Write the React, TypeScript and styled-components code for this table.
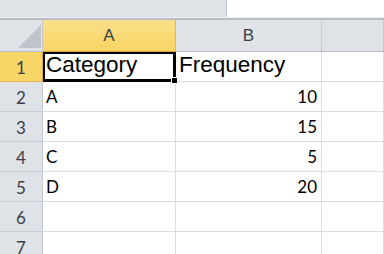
import React from "react";
import styled, { createGlobalStyle, css } from "styled-components";

const GlobalStyle = createGlobalStyle`
  html, body {
    margin: 0;
    padding: 0;
    background: #ffffff;
    overflow: hidden;
  }
`;

const Sheet = styled.div`
  width: 384px;
  height: 254px;
  overflow: hidden;
  background: #ffffff;
  display: flex;
  flex-direction: column;
`;

const FormulaStrip = styled.div`
  flex-shrink: 0;
  height: 17px;
  display: grid;
  grid-template-columns: 226px 1fr;
  background: #dfe3e8;
  border-bottom: 1px solid #eef0f3;
`;

const FormulaInput = styled.div`
  background: #ffffff;
  border-left: 1px solid #c3c8cf;
`;

const Divider = styled.div`
  flex-shrink: 0;
  height: 2px;
  background: #b9bec6;
`;

const Grid = styled.div`
  flex-shrink: 0;
  display: grid;
  grid-template-columns: 43px 133px 146px 1fr;
  grid-template-rows: 32px repeat(7, 30px);
`;

const CornerCell = styled.div`
  background: #dfe3e8;
  border-right: 1px solid #c4c9d0;
  border-bottom: 1px solid #b7bcc4;
  display: flex;
  align-items: flex-end;
  justify-content: flex-end;
  padding: 0 1px 3px 0;
`;

const ColHeader = styled.div<{ $active?: boolean }>`
  background: ${(p) =>
    p.$active ? "linear-gradient(#fbe08a, #f8d462)" : "#dfe3e8"};
  border-right: 1px solid ${(p) => (p.$active ? "#e2b94a" : "#c4c9d0")};
  border-bottom: 1px solid ${(p) => (p.$active ? "#d7a93a" : "#b7bcc4")};
  display: flex;
  align-items: center;
  justify-content: center;
  font-family: "Liberation Sans", Arial, sans-serif;
  font-size: 17px;
  color: #3c3f44;
  padding-top: 1px;
`;

const RowHeader = styled.div<{ $active?: boolean }>`
  background: ${(p) => (p.$active ? "#f9d567" : "#dfe3e8")};
  border-right: 1px solid ${(p) => (p.$active ? "#d7a93a" : "#c4c9d0")};
  border-bottom: 1px solid ${(p) => (p.$active ? "#e2b94a" : "#c9ced5")};
  display: flex;
  align-items: flex-end;
  justify-content: center;
  padding-bottom: 3px;
  font-family: Lato, "Open Sans", sans-serif;
  font-size: 17px;
  color: #3c3f44;
`;

const Cell = styled.div<{ $align?: "left" | "right"; $header?: boolean; $selected?: boolean }>`
  position: relative;
  border-right: 1px solid #dadcdf;
  border-bottom: 1px solid #dadcdf;
  display: flex;
  align-items: flex-end;
  justify-content: ${(p) => (p.$align === "right" ? "flex-end" : "flex-start")};
  padding: 0 4px 4px 3px;
  white-space: nowrap;
  color: #000000;
  font-family: Lato, "Open Sans", sans-serif;
  font-size: 17px;
  ${(p) =>
    p.$header &&
    css`
      font-family: "Liberation Sans", Arial, sans-serif;
      font-size: 22.5px;
      padding-bottom: 3px;
    `}
  ${(p) =>
    p.$selected &&
    css`
      box-shadow: inset 0 0 0 2px #000000;
      border-right-color: #000000;
      border-bottom-color: #000000;
    `}
`;

const FillHandle = styled.span`
  position: absolute;
  right: -3px;
  bottom: -3px;
  width: 5px;
  height: 5px;
  background: #000000;
  border: 1px solid #ffffff;
  z-index: 2;
`;

const rows: [string, string][] = [
  ["Category", "Frequency"],
  ["A", "10"],
  ["B", "15"],
  ["C", "5"],
  ["D", "20"],
  ["", ""],
  ["", ""],
];

export default function App() {
  return (
    <>
      <GlobalStyle />
      <Sheet>
        <FormulaStrip>
          <div />
          <FormulaInput />
        </FormulaStrip>
        <Divider />
        <Grid>
          <CornerCell>
            <svg width="23" height="23" viewBox="0 0 23 23">
              <polygon points="0,23 23,23 23,0" fill="#bfc4ca" />
            </svg>
          </CornerCell>
          <ColHeader $active>A</ColHeader>
          <ColHeader>B</ColHeader>
          <ColHeader />
          {rows.map(([a, b], i) => (
            <React.Fragment key={i}>
              <RowHeader $active={i === 0}>{i + 1}</RowHeader>
              <Cell $header={i === 0} $selected={i === 0}>
                {a}
                {i === 0 && <FillHandle />}
              </Cell>
              <Cell $header={i === 0} $align={i === 0 ? "left" : "right"}>
                {b}
              </Cell>
              <Cell />
            </React.Fragment>
          ))}
        </Grid>
      </Sheet>
    </>
  );
}
